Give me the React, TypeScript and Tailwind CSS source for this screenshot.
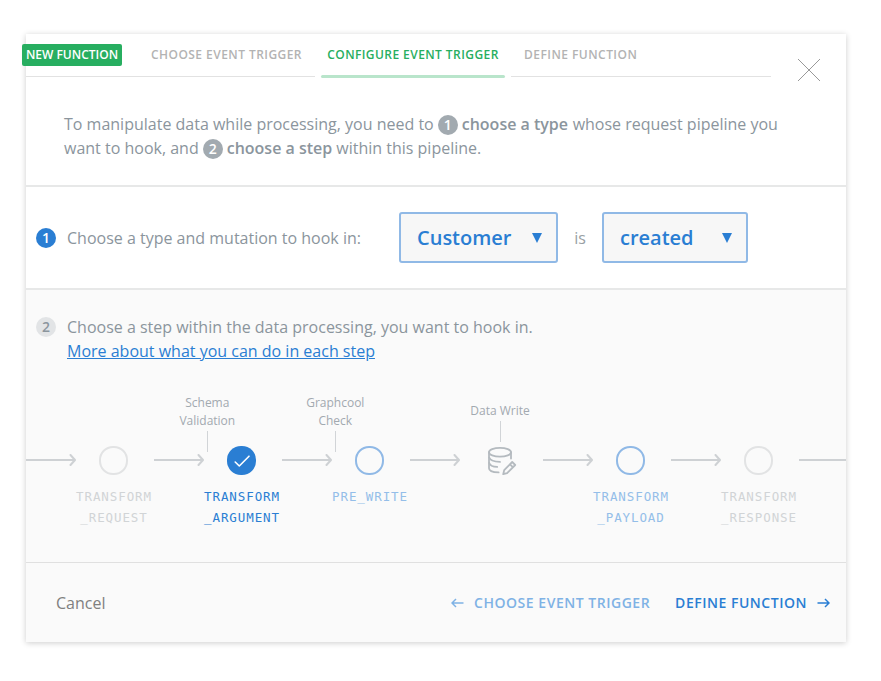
import type { ReactNode } from 'react'

function Arrow() {
  return (
    <svg className="block h-3 w-[50px]" viewBox="0 0 50 12" fill="none" stroke="#ced1d4" strokeWidth="2">
      <path d="M0 6H49" />
      <path d="M44.5 1L49 6L44.5 11" strokeLinecap="round" strokeLinejoin="round" />
    </svg>
  )
}

function Connector({ children }: { children?: ReactNode }) {
  return (
    <div className="relative mt-2 w-[50px] shrink-0">
      <Arrow />
      {children}
    </div>
  )
}

function Annotation({ lines, className }: { lines: string[]; className: string }) {
  return (
    <div className={`absolute flex w-20 flex-col items-center text-center text-xs leading-[18px] text-[#a2a9b0] ${className}`}>
      {lines.map((line) => (
        <span key={line}>{line}</span>
      ))}
      <span className="mt-px h-[21px] w-px bg-[#d1d4d7]" />
    </div>
  )
}

type StepState = 'disabled' | 'open' | 'selected'

const circle: Record<StepState, string> = {
  disabled: 'border-2 border-[#e2e3e4]',
  open: 'border-2 border-[#90b9e6]',
  selected: 'bg-[#2a7ed3]',
}

const label: Record<StepState, string> = {
  disabled: 'text-[#d1d4d6]',
  open: 'text-[#94bee9]',
  selected: 'text-[#2a7ed3]',
}

function Step({ lines, state }: { lines: string[]; state: StepState }) {
  return (
    <div className="flex w-[78px] shrink-0 flex-col items-center pr-[3px]">
      <div className={`flex size-[29px] items-center justify-center rounded-[14px] ${circle[state]}`}>
        {state === 'selected' && (
          <svg className="size-[18px]" viewBox="0 0 18 18" fill="none" stroke="white" strokeWidth="1.6">
            <path d="M2.2 10L6.3 14L16 4.2" strokeLinecap="round" strokeLinejoin="round" />
          </svg>
        )}
      </div>
      <div
        className={`mt-[11px] flex flex-col items-center pl-px whitespace-nowrap font-['DejaVu_Sans_Mono',monospace] text-[12.5px] leading-[21px] tracking-[0.9px] ${label[state]}`}
      >
        {lines.map((line) => (
          <span key={line}>{line}</span>
        ))}
      </div>
    </div>
  )
}

function DatabaseIcon() {
  return (
    <svg className="size-8" viewBox="0 0 32 32" fill="none" stroke="#b4babf" strokeWidth="1.8" strokeLinecap="round">
      <ellipse cx="14" cy="7.2" rx="11" ry="4.4" />
      <path d="M3 7.2V23.2C3 25.6 7 27.2 12.6 27.4M25 7.2V13.5" />
      <path d="M3.2 12.6C4 15.2 8.5 16.8 14 16.9M3.2 17.9C4 20.4 7 21.7 11.2 21.9" />
      <path d="M17.2 29.2L18.2 25.1L26.2 17L29.2 20L21.1 28.2ZM24 19.4L26.9 22.2" strokeLinejoin="round" />
    </svg>
  )
}

function Badge({ n, className }: { n: number; className: string }) {
  return (
    <span className={`inline-flex size-5 shrink-0 items-center justify-center rounded-full text-sm leading-5 font-semibold ${className}`}>
      {n}
    </span>
  )
}

function Select({ value, className }: { value: string; className: string }) {
  return (
    <div
      className={`flex h-[51px] items-center justify-between rounded-[3px] border-2 border-[#90b9e6] bg-[#f7f7f7] pl-4 pr-[14px] text-xl font-semibold text-[#2a7ed3] ${className}`}
    >
      <span>{value}</span>
      <svg className="h-[10px] w-[10px]" viewBox="0 0 10 10" fill="currentColor">
        <path d="M0 0H10L5 10Z" />
      </svg>
    </div>
  )
}

export default function App() {
  return (
    <div className="h-[681px] w-[881px] overflow-hidden bg-white pt-[34px] pl-[26px] font-['Open_Sans',sans-serif] text-base leading-6 text-[#8b959d]">
      <div className="flex h-[608px] w-[820px] flex-col bg-white shadow-[0_1px_6px_rgba(0,0,0,0.2)]">
        <header className="flex h-[153px] shrink-0 flex-col border-b-2 border-[#e7e8e8]">
          <div className="flex h-11 text-xs leading-[22px] font-semibold text-[#b3b3b3]">
            <div className="flex h-[43px] w-[289px] border-b border-[#e2e2e2] pt-[10px] whitespace-nowrap">
              <span className="-ml-1 h-[22px] w-[100px] rounded-[2px] bg-[#27ae60] text-center text-white">NEW FUNCTION</span>
              <span className="ml-[29px] tracking-[0.45px]">CHOOSE EVENT TRIGGER</span>
            </div>
            <div className="ml-[6px] h-11 w-[184px] pt-[10px] text-center tracking-[0.43px] whitespace-nowrap text-[#27ae60]">
              CONFIGURE EVENT TRIGGER
              <div className="mt-[9px] h-[3px] rounded-full bg-[#b9e5cb]" />
            </div>
            <div className="ml-[6px] h-[43px] w-[260px] border-b border-[#e2e2e2] pt-[10px] pl-[13px] tracking-[0.46px]">
              DEFINE FUNCTION
            </div>
            <svg className="mt-6 ml-[26px] size-6" viewBox="0 0 24 24" fill="none" stroke="#999" strokeWidth="1">
              <path d="M1 1L23 23M23 1L1 23" />
            </svg>
          </div>
          <div className="mt-[34px] ml-[38px] whitespace-nowrap">
            <p className="flex h-6 items-center">
              To manipulate data while processing, you need to
              <Badge n={1} className="mx-1 mt-0.5 bg-[#a2aab0] text-white" />
              <b className="mr-[4.6px] font-semibold">choose a type</b> whose request pipeline you
            </p>
            <p className="flex h-6 items-center">
              want to hook, and
              <Badge n={2} className="mx-1 mt-0.5 bg-[#a2aab0] text-white" />
              <b className="mr-1 font-semibold">choose a step</b> within this pipeline.
            </p>
          </div>
        </header>

        <section className="flex h-[103px] shrink-0 items-center border-b-2 border-[#e7e8e8] pl-[10px]">
          <Badge n={1} className="bg-[#2a7ed3] text-white" />
          <span className="ml-[11px] w-[332px]">Choose a type and mutation to hook in:</span>
          <Select value="Customer" className="w-[159px]" />
          <span className="w-11 text-center text-[#999fa4]">is</span>
          <Select value="created" className="w-[146px]" />
        </section>

        <section className="flex h-[273px] shrink-0 flex-col border-b border-[#e0e0e0] bg-[#fafafa] pt-[25px]">
          <div className="flex pl-[10px]">
            <Badge n={2} className="mt-[2px] bg-[#e2e4e6] text-[#8b959d]" />
            <div className="ml-[11px]">
              <p>Choose a step within the data processing, you want to hook in.</p>
              <a className="text-[#2a7ed3] underline">More about what you can do in each step</a>
            </div>
          </div>
          <div className="mt-[83px] flex items-start">
            <Connector />
            <Step lines={['TRANSFORM', '_REQUEST']} state="disabled" />
            <Connector>
              <Annotation lines={['Schema', 'Validation']} className="bottom-[14px] left-[13.3px]" />
            </Connector>
            <Step lines={['TRANSFORM', '_ARGUMENT']} state="selected" />
            <Connector>
              <Annotation lines={['Graphcool', 'Check']} className="bottom-[14px] left-[13.3px]" />
            </Connector>
            <Step lines={['PRE_WRITE']} state="open" />
            <Connector />
            <div className="relative -mt-px w-[83px] shrink-0 pl-[26px]">
              <Annotation lines={['Data Write']} className="bottom-[35px] left-0" />
              <DatabaseIcon />
            </div>
            <Connector />
            <Step lines={['TRANSFORM', '_PAYLOAD']} state="open" />
            <Connector />
            <Step lines={['TRANSFORM', '_RESPONSE']} state="disabled" />
            <div className="mt-[13px] h-0.5 flex-1 bg-[#ced1d4]" />
          </div>
        </section>

        <footer className="flex flex-1 items-center bg-[#fafafa] pr-4 pl-[30px]">
          <span className="text-[#808080]">Cancel</span>
          <div className="ml-auto flex items-center text-sm font-semibold tracking-[0.52px] whitespace-nowrap text-[#2a7ed3]">
            <span className="flex w-[224px] items-center text-[#7fb2e5]">
              <svg className="mr-[10px] h-3 w-[13px]" viewBox="0 0 13 12" fill="none" stroke="currentColor" strokeWidth="1.5">
                <path d="M12.5 6H1.2M5 2L1 6L5 10" />
              </svg>
              CHOOSE EVENT TRIGGER
            </span>
            DEFINE FUNCTION
            <svg className="ml-[10px] h-3 w-[13px]" viewBox="0 0 13 12" fill="none" stroke="currentColor" strokeWidth="1.5">
              <path d="M0.5 6H11.8M8 2L12 6L8 10" />
            </svg>
          </div>
        </footer>
      </div>
    </div>
  )
}
